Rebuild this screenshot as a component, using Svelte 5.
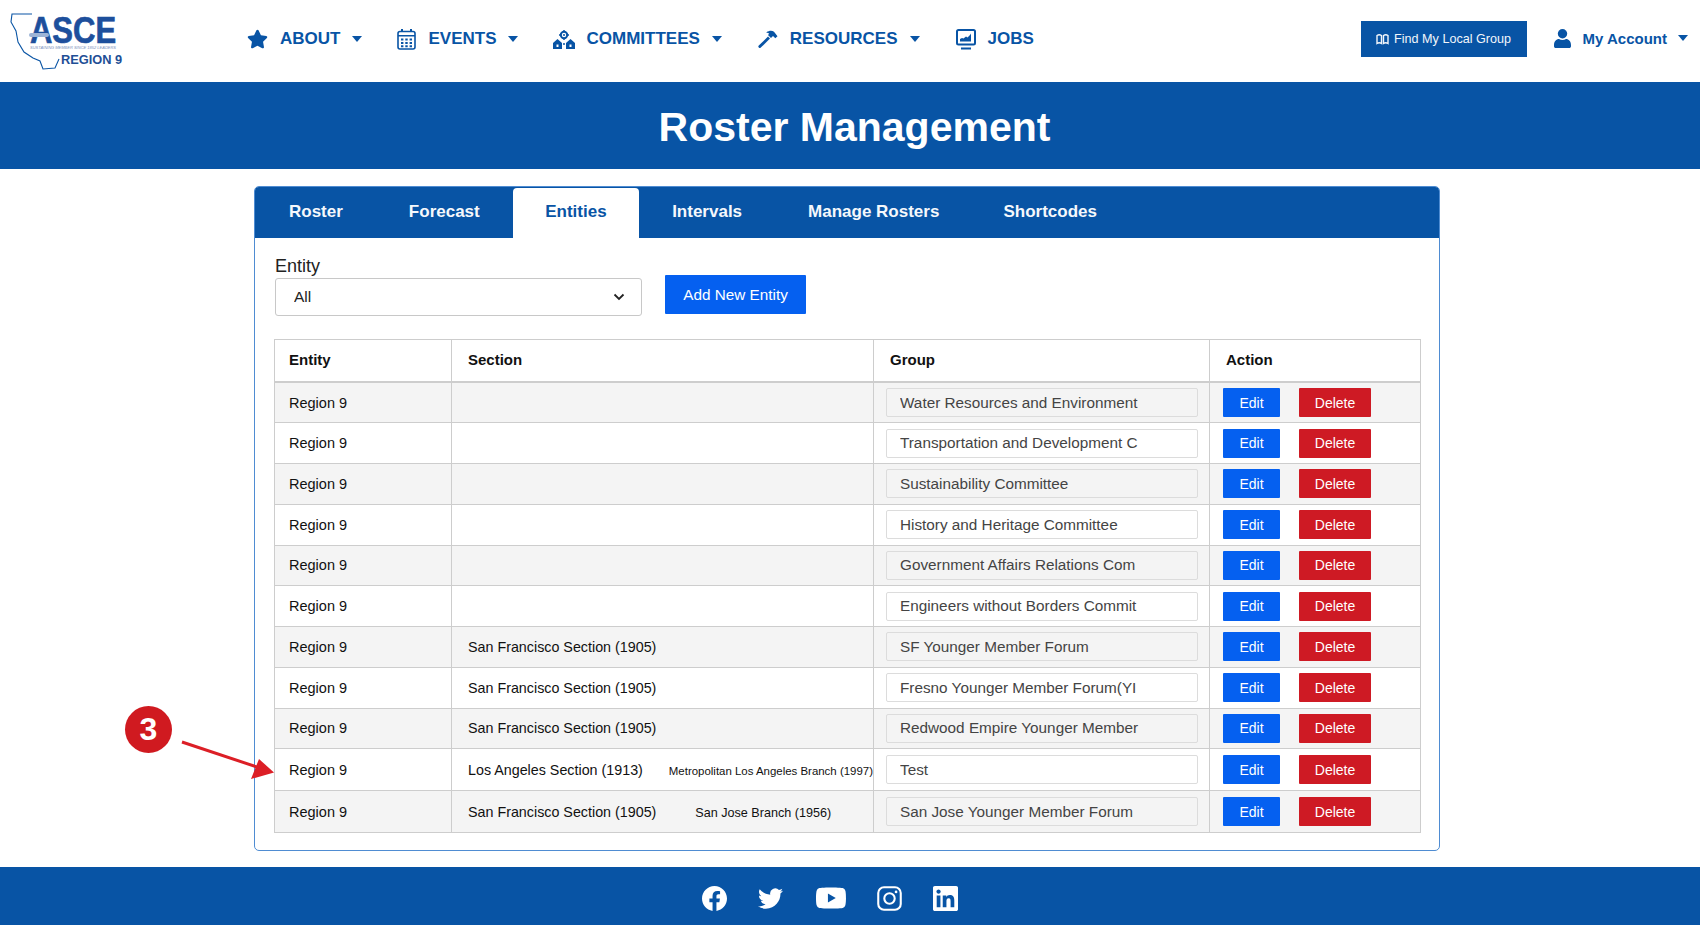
<script>
  const tabs = ['Roster', 'Forecast', 'Entities', 'Intervals', 'Manage Rosters', 'Shortcodes'];

  const sf = 'San Francisco Section (1905)';
  const rows = [
    { section: '', group: 'Water Resources and Environment' },
    { section: '', group: 'Transportation and Development C' },
    { section: '', group: 'Sustainability Committee' },
    { section: '', group: 'History and Heritage Committee' },
    { section: '', group: 'Government Affairs Relations Com' },
    { section: '', group: 'Engineers without Borders Commit' },
    { section: sf, group: 'SF Younger Member Forum' },
    { section: sf, group: 'Fresno Younger Member Forum(YI' },
    { section: sf, group: 'Redwood Empire Younger Member' },
    { section: 'Los Angeles Section (1913)', branch: 'Metropolitan Los Angeles Branch (1997)', gap: 22, small: true, group: 'Test', tall: true },
    { section: sf, branch: 'San Jose Branch (1956)', gap: 35, group: 'San Jose Younger Member Forum', tall: true }
  ];
</script>

<div class="page">
  <header class="site-header">
    <svg class="logo" viewBox="0 -5 115 63" width="115" height="63" aria-label="ASCE Region 9">
      <path class="logo-state" d="M22 1H2L1 9l5 9 2 11 6 10 9 6 7 3 3 8 12-1 4-9" />
      <text class="logo-asce" x="20" y="25" transform="scale(1 1.2)">ASCE</text>
      <rect class="logo-stripe" x="19" y="20" width="20" height="4" rx="2" />
      <text class="logo-tiny" x="20" y="36" textLength="86" lengthAdjust="spacingAndGlyphs">SUSTAINING MEMBER SINCE 1852 LEADERS</text>
      <text class="logo-region" x="51" y="51">REGION 9</text>
    </svg>

    <nav class="main-nav">
      <a class="nav-item">
        <svg class="nav-icon" width="21" height="20" viewBox="0 0 576 512"><path d="M259.3 17.8 194 150.2 47.9 171.5c-26.2 3.8-36.7 36.1-17.7 54.6l105.7 103-25 145.5c-4.5 26.3 23.2 46 46.4 33.7L288 439.6l130.7 68.7c23.2 12.2 50.9-7.4 46.4-33.7l-25-145.5 105.7-103c19-18.5 8.5-50.8-17.7-54.6L382 150.2 316.7 17.8c-11.7-23.6-45.6-23.9-57.4 0z" /></svg>
        ABOUT<span class="caret"></span>
      </a>
      <a class="nav-item">
        <svg class="nav-icon" width="19" height="21" viewBox="0 0 19 21"><path d="M4 0h2v3H4zM13 0h2v3h-2z" /><rect x="1" y="2.5" width="17" height="17.5" rx="2" fill="none" stroke="currentColor" stroke-width="1.6" /><path d="M1 6h17v1.6H1zM4 9.5h2.4v2H4zM8.3 9.5h2.4v2H8.3zM12.6 9.5H15v2h-2.4zM4 13h2.4v2H4zM8.3 13h2.4v2H8.3zM12.6 13H15v2h-2.4zM4 16.3h2.4v2H4zM8.3 16.3h2.4v2H8.3zM12.6 16.3H15v2h-2.4z" /></svg>
        EVENTS<span class="caret"></span>
      </a>
      <a class="nav-item">
        <svg class="nav-icon tight" width="22" height="19" viewBox="0 0 22 19"><circle cx="11" cy="5" r="3.2" fill="none" stroke="currentColor" stroke-width="2" /><circle cx="11" cy="5" r="1" /><path d="M11 0v1.5M11 8.5V10M6 5h1.5M14.5 5H16" stroke="currentColor" stroke-width="1.4" /><path fill-rule="evenodd" d="M0 13l4.5-4L9 13v6H0zM3.5 14.5v2.5h2v-2.5zM13 13l4.5-4 4.500 4v6h-9zM16.500 14.500v2.500h2v-2.500z" /><circle cx="11" cy="14" r="1" /></svg>
        COMMITTEES<span class="caret"></span>
      </a>
      <a class="nav-item resources">
        <svg class="nav-icon" width="20" height="18" viewBox="0 0 20 18"><path d="M0.800 15.600 10 6.400l2 2-9.200 9.200a1.300 1.300 0 0 1-2-2zM8.500 2.300C11 .600 14 .300 16 1.800l3.500 4.500-2.200 2-2.300-2.300-2 2-3-3 1.200-1.300c-.8-.8-1.600-1-2.700-1z" /></svg>
        RESOURCES<span class="caret"></span>
      </a>
      <a class="nav-item jobs">
        <svg class="nav-icon" width="20" height="21" viewBox="0 0 20 21"><rect x="1" y="1" width="18" height="14.500" rx="1.500" fill="none" stroke="currentColor" stroke-width="2" /><path d="M4 12.500V10l2-1 1.500.5L10 7.500l1.500 1L14 6l1-1.500v8zM5 18.500h10v2H5z" /></svg>
        JOBS
      </a>
    </nav>

    <div class="header-right">
      <a class="find-group">
        <svg width="13" height="12" viewBox="0 0 13 12" fill="none" stroke="currentColor" stroke-width="1.400"><path d="M1 2.500c1.500-1 3-1 4.500 0v8c-1.500-1-3-1-4.500 0zM7.500 2.500c1.500-1 3-1 4.500 0v8c-1.500-1-3-1-4.500 0z" /></svg>
        Find My Local Group
      </a>
      <a class="account">
        <svg width="17" height="19" viewBox="0 0 17 19"><circle cx="8.500" cy="4.700" r="4.700" /><path d="M0 16c0-3.500 2.300-6 5-6 1 .6 2.200 1 3.500 1s2.500-.4 3.500-1c2.700 0 5 2.500 5 6v1.200c0 1-.8 1.800-1.800 1.800H1.800C.8 19 0 18.200 0 17.200z" /></svg>
        My Account<span class="caret"></span>
      </a>
    </div>
  </header>

  <div class="banner"><h1>Roster Management</h1></div>

  <main class="content">
    <section class="card">
      <div class="tabs">
        {#each tabs as tab}
          <a class="tab" class:active={tab === 'Entities'}>{tab}</a>
        {/each}
      </div>

      <div class="panel">
        <div class="toolbar">
          <label class="field">
            <span>Entity</span>
            <div class="select-wrap">
              <select>
                <option>All</option>
              </select>
              <svg class="chevron" width="12" height="8" viewBox="0 0 12 8"><path d="M1.500 1.500 6 6l4.500-4.500" fill="none" stroke="#222" stroke-width="1.800" /></svg>
            </div>
          </label>
          <button class="btn add">Add New Entity</button>
        </div>

        <table>
          <colgroup>
            <col class="col-entity" />
            <col class="col-section" />
            <col class="col-group" />
            <col class="col-action" />
          </colgroup>
          <thead>
            <tr>
              <th>Entity</th>
              <th>Section</th>
              <th>Group</th>
              <th>Action</th>
            </tr>
          </thead>
          <tbody>
            {#each rows as row}
              <tr class:tall={row.tall}>
                <td>Region 9</td>
                <td class="section">
                  {row.section}
                  {#if row.branch}
                    <span class="branch" class:small={row.small} style="margin-left: {row.gap}px">{row.branch}</span>
                  {/if}
                </td>
                <td class="group"><input type="text" readonly value={row.group} /></td>
                <td class="action">
                  <button class="btn edit">Edit</button>
                  <button class="btn delete">Delete</button>
                </td>
              </tr>
            {/each}
          </tbody>
        </table>
      </div>
    </section>
  </main>

  <footer class="site-footer">
    <svg width="25" height="25" viewBox="0 0 24 24"><path d="M24 12.073c0-6.627-5.373-12-12-12s-12 5.373-12 12c0 5.990 4.388 10.954 10.125 11.854v-8.385H7.078v-3.470h3.047V9.430c0-3.007 1.792-4.669 4.533-4.669 1.312 0 2.686.235 2.686.235v2.953H15.830c-1.491 0-1.956.925-1.956 1.874v2.250h3.328l-.532 3.470h-2.796v8.385C19.612 23.027 24 18.062 24 12.073z" /></svg>
    <svg width="25" height="25" viewBox="0 0 24 24"><path d="M23.953 4.570a10 10 0 01-2.825.775 4.958 4.958 0 002.163-2.723c-.951.555-2.005.959-3.127 1.184a4.920 4.920 0 00-8.384 4.482C7.690 8.095 4.067 6.130 1.640 3.162a4.822 4.822 0 00-.666 2.475c0 1.710.870 3.213 2.188 4.096a4.904 4.904 0 01-2.228-.616v.060a4.923 4.923 0 003.946 4.827 4.996 4.996 0 01-2.212.085 4.936 4.936 0 004.604 3.417 9.867 9.867 0 01-6.102 2.105c-.390 0-.779-.023-1.170-.067a13.995 13.995 0 007.557 2.209c9.053 0 13.998-7.496 13.998-13.985 0-.210 0-.420-.015-.630A9.935 9.935 0 0024 4.590z" /></svg>
    <svg class="yt" width="30" height="30" viewBox="0 0 24 24"><path d="M23.498 6.186a3.016 3.016 0 0 0-2.122-2.136C19.505 3.545 12 3.545 12 3.545s-7.505 0-9.377.505A3.017 3.017 0 0 0 .502 6.186C0 8.070 0 12 0 12s0 3.930.502 5.814a3.016 3.016 0 0 0 2.122 2.136c1.871.505 9.376.505 9.376.505s7.505 0 9.377-.505a3.015 3.015 0 0 0 2.122-2.136C24 15.930 24 12 24 12s0-3.930-.502-5.814zM9.545 15.568V8.432L15.818 12l-6.273 3.568z" /></svg>
    <svg width="25" height="25" viewBox="0 0 24 24" fill="none" stroke="#fff" stroke-width="2"><rect x="1.200" y="1.200" width="21.600" height="21.600" rx="5.500" /><circle cx="12" cy="12" r="5" /><circle cx="18.300" cy="5.700" r="1.300" fill="#fff" stroke="none" /></svg>
    <svg width="25" height="25" viewBox="0 0 24 24"><path d="M20.447 20.452h-3.554v-5.569c0-1.328-.027-3.037-1.852-3.037-1.853 0-2.136 1.445-2.136 2.939v5.667H9.351V9h3.414v1.561h.046c.477-.9 1.637-1.850 3.370-1.850 3.601 0 4.267 2.370 4.267 5.455v6.286zM5.337 7.433c-1.144 0-2.063-.926-2.063-2.065 0-1.138.920-2.063 2.063-2.063 1.140 0 2.064.925 2.064 2.063 0 1.139-.925 2.065-2.064 2.065zm1.782 13.019H3.555V9h3.564v11.452zM22.225 0H1.771C.792 0 0 .774 0 1.729v20.542C0 23.227.792 24 1.771 24h20.451C23.200 24 24 23.227 24 22.271V1.729C24 .774 23.200 0 22.222 0h.003z" /></svg>
  </footer>

  <!-- callout drawn over the table -->
  <div class="callout-badge">3</div>
  <svg class="callout-arrow" width="110" height="45" viewBox="0 0 110 45">
    <path d="M1 2 85 30" stroke="#dc1f26" stroke-width="3" fill="none" />
    <path d="M93 32.500 70 39 78 19z" fill="#dc1f26" />
  </svg>
</div>

<style>
  :global(body) {
    margin: 0;
    background: #fff;
    font-family: "Liberation Sans", Arial, sans-serif;
  }

  .page {
    position: relative;
    height: 925px;
    overflow: hidden;
    color: #111;
  }

  .site-header {
    display: flex;
    align-items: center;
    height: 82px;
    box-sizing: border-box;
    padding: 0 0 4px 10px;
    color: #0854a5;
  }

  .logo {
    flex: none;
    margin-top: 1px;
  }

  .logo-state {
    fill: none;
    stroke: #0a55a5;
    stroke-width: 1.100;
  }

  .logo-asce {
    font-size: 31px;
    font-weight: 700;
    fill: #1d4f9c;
    stroke: #1d4f9c;
    stroke-width: 0.600;
  }

  .logo-stripe {
    fill: #9db4d6;
  }

  .logo-tiny {
    font-size: 4px;
    font-style: italic;
    fill: #7c93bd;
  }

  .logo-region {
    font-size: 12.800px;
    font-weight: 700;
    fill: #1f4f96;
  }

  .main-nav {
    display: flex;
    align-items: center;
    gap: 35px;
    margin-left: 122px;
  }

  .nav-item {
    display: flex;
    align-items: center;
    font-size: 17px;
    font-weight: 700;
  }

  .nav-item.resources {
    margin-left: 1px;
  }

  .nav-item.jobs {
    margin-left: 1px;
  }

  .nav-icon {
    margin-right: 12px;
    fill: currentColor;
  }

  .nav-icon.tight {
    margin-right: 11px;
  }

  .caret {
    width: 0;
    height: 0;
    margin-left: 12px;
    border-left: 5.500px solid transparent;
    border-right: 5.500px solid transparent;
    border-top: 6px solid currentColor;
  }

  .header-right {
    display: flex;
    align-items: center;
    margin-left: auto;
    padding-right: 12px;
  }

  .find-group {
    display: flex;
    align-items: center;
    justify-content: center;
    gap: 5px;
    width: 166px;
    height: 36px;
    background: #0854a5;
    color: #f2f6fb;
    font-size: 12.600px;
  }

  .account {
    display: flex;
    align-items: center;
    margin-left: 27px;
    padding-bottom: 2px;
    font-size: 15px;
    font-weight: 700;
  }

  .account svg {
    margin-right: 12px;
    fill: currentColor;
  }

  .account .caret {
    margin-left: 11px;
  }

  .banner {
    display: flex;
    align-items: center;
    justify-content: center;
    height: 87px;
    box-sizing: border-box;
    padding: 4px 0 0 9px;
    background: #0854a5;
  }

  .banner h1 {
    margin: 0;
    color: #fff;
    font-size: 41px;
    font-weight: 700;
  }

  .content {
    height: 698px;
    box-sizing: border-box;
    padding: 17px 0 0 254px;
  }

  .card {
    width: 1186px;
    height: 665px;
    box-sizing: border-box;
    border: 1px solid #4f8cd2;
    border-radius: 5px;
    overflow: hidden;
  }

  .tabs {
    display: flex;
    align-items: flex-end;
    height: 51px;
    padding-left: 1px;
    background: #0854a5;
  }

  .tab {
    display: flex;
    align-items: center;
    height: 51px;
    box-sizing: border-box;
    padding: 0 33px 2px;
    color: #f5f8fc;
    font-size: 17px;
    font-weight: 700;
  }

  .tab:last-child {
    margin-left: -2px;
  }

  .tab.active {
    height: 50px;
    padding: 0 32.500px 2px;
    background: #fff;
    border-radius: 4px 4px 0 0;
    color: #0854a5;
  }

  .panel {
    padding: 18px 20px 0;
  }

  .toolbar {
    display: flex;
    align-items: flex-end;
    gap: 23px;
  }

  .field {
    display: block;
    font-size: 18px;
    color: #222;
  }

  .field span {
    display: block;
    height: 22px;
    line-height: 20px;
  }

  .select-wrap {
    position: relative;
    width: 367px;
  }

  select {
    display: block;
    width: 100%;
    height: 38px;
    box-sizing: border-box;
    padding: 0 18px 2px;
    background: #fff;
    border: 1px solid #c8c8c8;
    border-radius: 3px;
    appearance: none;
    color: #222;
    font-family: inherit;
    font-size: 15.500px;
  }

  .chevron {
    position: absolute;
    top: 15px;
    right: 17px;
  }

  .btn {
    border: none;
    border-radius: 1px;
    color: #fff;
    font-family: inherit;
    font-size: 14px;
    padding: 0;
  }

  .add {
    width: 141px;
    height: 39px;
    margin-bottom: 2px;
    background: #0560f0;
    font-size: 15.300px;
  }

  table {
    width: 1146px;
    margin: 23px 0 0 -1px;
    border-collapse: collapse;
    table-layout: fixed;
  }

  .col-entity { width: 177px; }
  .col-section { width: 422px; }
  .col-group { width: 336px; }
  .col-action { width: 211px; }

  th,
  td {
    padding: 0 15px;
    border: 1px solid #cdcdcd;
    font-size: 14.500px;
    text-align: left;
    white-space: nowrap;
  }

  th:first-child,
  td:first-child {
    padding-left: 14px;
  }

  th {
    height: 38px;
    padding: 0 16px 3px;
    color: #111;
    font-size: 15px;
    font-weight: 700;
    border-bottom-width: 2px;
  }

  tbody tr {
    height: 40.750px;
  }

  tbody tr.tall {
    height: 42px;
  }

  tbody tr:nth-child(odd) {
    background: #f4f4f4;
  }

  td.section {
    padding: 0 0 0 16px;
    font-size: 14.300px;
  }

  .branch {
    font-size: 12.600px;
  }

  .branch.small {
    font-size: 11.450px;
  }

  td.group {
    padding: 0 11px 0 12px;
  }

  input {
    display: block;
    width: 100%;
    height: 29px;
    box-sizing: border-box;
    padding: 0 13px;
    background: transparent;
    border: 1px solid #dcdcdc;
    border-radius: 2px;
    color: #444;
    font-family: inherit;
    font-size: 15.300px;
  }

  td.action {
    padding: 0 0 0 13px;
    font-size: 0;
  }

  .edit,
  .delete {
    height: 29px;
  }

  .edit {
    width: 57px;
    margin-right: 19px;
    background: #0560f0;
  }

  .delete {
    width: 72px;
    background: #ce1a24;
  }

  .site-footer {
    display: flex;
    align-items: center;
    height: 58px;
    box-sizing: border-box;
    padding: 4px 0 0 702px;
    gap: 31px;
    background: #0854a5;
    fill: #fff;
  }

  .yt {
    margin-left: 2px;
  }

  .callout-badge {
    position: absolute;
    left: 125px;
    top: 706px;
    display: flex;
    align-items: center;
    justify-content: center;
    width: 47px;
    height: 47px;
    background: #d01a20;
    border-radius: 50%;
    color: #fff;
    font-size: 32px;
    font-weight: 700;
  }

  .callout-arrow {
    position: absolute;
    left: 181px;
    top: 740px;
  }
</style>
